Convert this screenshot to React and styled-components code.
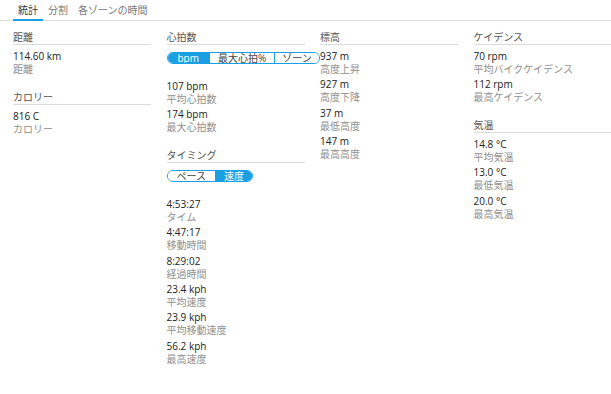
import * as React from "react";
import styled, { createGlobalStyle } from "styled-components";

const Global = createGlobalStyle`
  body {
    margin: 0;
    background: #fff;
    font-family: "Open Sans", "Noto Sans CJK JP", sans-serif;
    font-size: 10px;
    color: #222;
  }
`;

const blue = "#1a9fe3";

const TabBar = styled.div`
  display: flex;
  padding-left: 13px;
  border-bottom: 1px solid #dedede;
`;

const Tab = styled.div`
  padding: 4px 5px 2px;
  line-height: 13px;
  margin-bottom: -1px;
  border-bottom: 2px solid ${p => (p.active ? blue : "transparent")};
  color: ${p => (p.active ? "#333" : "#777")};
`;

const Columns = styled.div`
  display: grid;
  grid-template-columns: repeat(4, 138px);
  column-gap: 15.5px;
  padding: 10px 0 0 13px;
`;

const Column = styled.div`
  display: flex;
  flex-direction: column;
  min-width: 0;
`;

const Section = styled.div`
  margin-bottom: 12.5px;
`;

const Header = styled.div`
  line-height: 13px;
  border-bottom: 1px solid #dcdcdc;
  color: #555;
  margin-bottom: 5px;
`;

const Item = styled.div`
  margin-bottom: 2.3px;
  line-height: 13px;
`;

const Value = styled.div`
  color: #222;
  white-space: nowrap;
`;

const Label = styled.div`
  color: #909090;
  white-space: nowrap;
`;

const Toggle = styled.div`
  display: inline-flex;
  align-self: flex-start;
  border: 1px solid ${blue};
  border-radius: 6px;
  overflow: hidden;
  height: 10px;
  margin: 2px 0 16px;
  white-space: nowrap;
`;

const Segment = styled.div`
  padding: 0 ${p => p.pad || 9}px;
  line-height: 10px;
  background: ${p => (p.active ? blue : "#fff")};
  color: ${p => (p.active ? "#fff" : "#444")};
  & + & {
    border-left: 1px solid ${blue};
  }
`;

const Stat = ({ value, label }) => (
  <Item>
    <Value>{value}</Value>
    <Label>{label}</Label>
  </Item>
);

export default function App() {
  return (
    <div>
      <Global />
      <TabBar>
        <Tab active>統計</Tab>
        <Tab>分割</Tab>
        <Tab>各ゾーンの時間</Tab>
      </TabBar>
      <Columns>
        <Column>
          <Section>
            <Header>距離</Header>
            <Stat value="114.60 km" label="距離" />
          </Section>
          <Section>
            <Header>カロリー</Header>
            <Stat value="816 C" label="カロリー" />
          </Section>
        </Column>

        <Column>
          <Section>
            <Header>心拍数</Header>
            <Toggle>
              <Segment active pad={10}>bpm</Segment>
              <Segment pad={8}>最大心拍%</Segment>
              <Segment pad={7}>ゾーン</Segment>
            </Toggle>
            <Stat value="107 bpm" label="平均心拍数" />
            <Stat value="174 bpm" label="最大心拍数" />
          </Section>
          <Section>
            <Header>タイミング</Header>
            <Toggle>
              <Segment pad={9}>ペース</Segment>
              <Segment active pad={8}>速度</Segment>
            </Toggle>
            <Stat value="4:53:27" label="タイム" />
            <Stat value="4:47:17" label="移動時間" />
            <Stat value="8:29:02" label="経過時間" />
            <Stat value="23.4 kph" label="平均速度" />
            <Stat value="23.9 kph" label="平均移動速度" />
            <Stat value="56.2 kph" label="最高速度" />
          </Section>
        </Column>

        <Column>
          <Section>
            <Header>標高</Header>
            <Stat value="937 m" label="高度上昇" />
            <Stat value="927 m" label="高度下降" />
            <Stat value="37 m" label="最低高度" />
            <Stat value="147 m" label="最高高度" />
          </Section>
        </Column>

        <Column>
          <Section>
            <Header>ケイデンス</Header>
            <Stat value="70 rpm" label="平均バイクケイデンス" />
            <Stat value="112 rpm" label="最高ケイデンス" />
          </Section>
          <Section>
            <Header>気温</Header>
            <Stat value="14.8 °C" label="平均気温" />
            <Stat value="13.0 °C" label="最低気温" />
            <Stat value="20.0 °C" label="最高気温" />
          </Section>
        </Column>
      </Columns>
    </div>
  );
}
